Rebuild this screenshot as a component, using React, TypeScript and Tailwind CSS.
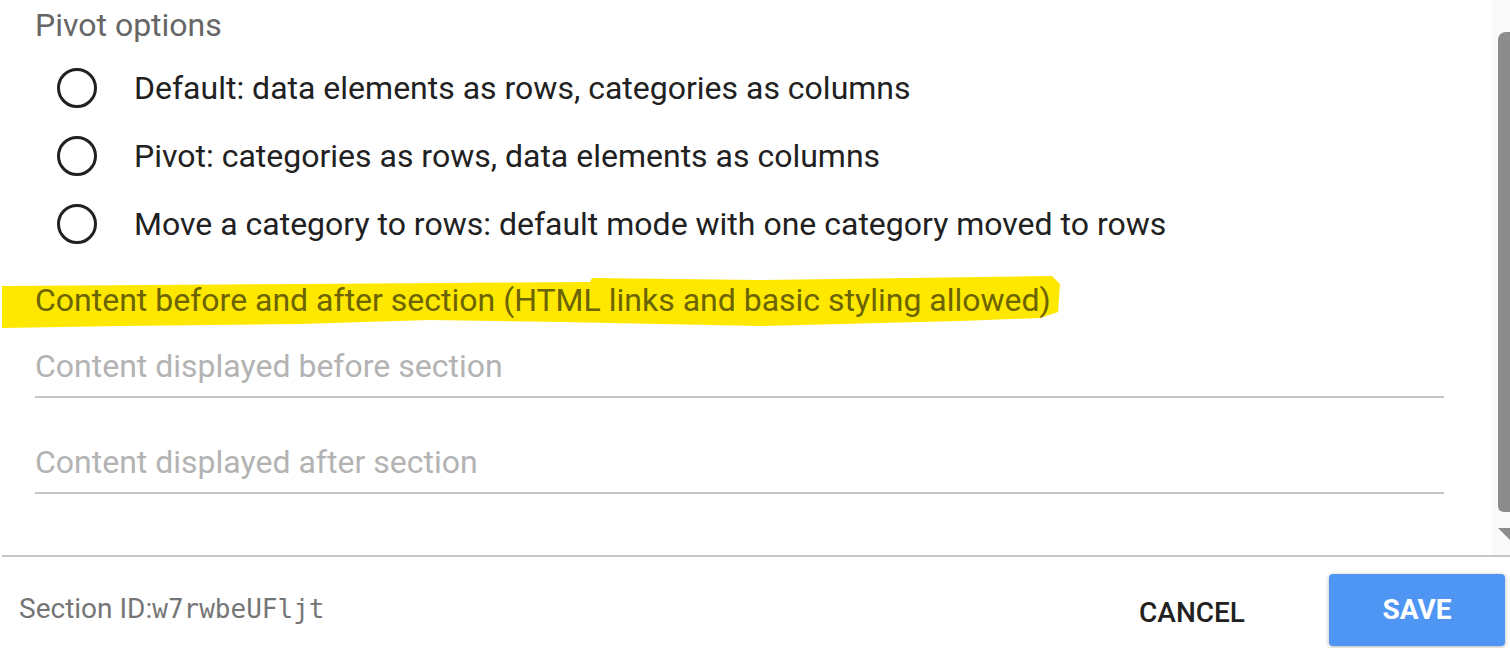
const options = [
  'Default: data elements as rows, categories as columns',
  'Pivot: categories as rows, data elements as columns',
  'Move a category to rows: default mode with one category moved to rows',
]

const App = () => {
  return (
    <div className="w-[1510px] h-[648px] bg-white flex flex-col overflow-hidden font-['Roboto',sans-serif]">
      {/* scrollable dialog body */}
      <div className="flex h-[555px]">
        <div className="relative flex-1 pl-[35px] pr-[48px]">
          {/* marker highlight drawn over the label */}
          <svg className="absolute left-0 top-[274px] w-[1062px] h-[58px]" viewBox="0 0 1062 58">
            <path
              d="M2 12 L300 10 L590 8 L592 4 L760 6 L1052 2 L1060 10 L1058 38 L1040 44 L960 47 L760 52 L560 48 L430 46 L300 50 L120 52 L2 54 Z"
              fill="#ffe800"
            />
          </svg>

          <div className="h-[50px] flex items-center text-[32px] text-[#666666]">Pivot options</div>

          <div className="flex flex-col mt-[4px]">
            {options.map((o) => (
              <div key={o} className="h-[68px] flex items-center gap-[38px] pl-[22px]">
                <span className="w-[40px] h-[40px] rounded-full border-[3px] border-[#212121] shrink-0" />
                <span className="text-[32px] text-[#212121] -ml-[1px]">{o}</span>
              </div>
            ))}
          </div>

          <div className="relative h-[50px] mt-[17px] flex items-center text-[32px] text-[#6b6400]">
            Content before and after section (HTML links and basic styling allowed)
          </div>

          <div className="flex flex-col mt-[11px] gap-[34px]">
            <div className="h-[62px] flex items-center border-b-2 border-[#c4c4c4] text-[32px] text-[#b3b3b3]">
              Content displayed before section
            </div>
            <div className="h-[62px] flex items-center border-b-2 border-[#c4c4c4] text-[32px] text-[#b3b3b3]">
              Content displayed after section
            </div>
          </div>
        </div>

        {/* scrollbar */}
        <div className="w-[18px] bg-[#fafafa] flex flex-col items-end">
          <div className="mt-[32px] w-[12px] h-[480px] bg-[#8c8c8c] rounded-tl-[8px] rounded-bl-[6px]" />
          <svg className="mt-[16px]" width="12" height="12" viewBox="0 0 12 12">
            <path d="M0 0 L12 0 L12 12 Z" fill="#8c8c8c" />
          </svg>
        </div>
      </div>

      <div className="h-[2px] ml-[2px] bg-[#c6c6c6]" />

      {/* footer */}
      <div className="flex-1 flex items-center pl-[19px] pr-[5px]">
        <div className="text-[28px] text-[#757575] mt-[12px]">
          Section ID:<span className="font-['DejaVu_Sans_Mono',monospace] text-[26px]">w7rwbeUFljt</span>
        </div>
        <div className="ml-auto flex items-center gap-[66px]">
          <button className="text-[28px] font-medium text-[#212121] mt-[20px] px-[18px]">CANCEL</button>
          <button className="w-[176px] h-[72px] mt-[14px] rounded-[4px] bg-[#4f96f4] text-white text-[28px] font-bold shadow-[0_1px_4px_rgba(0,0,0,0.3)]">
            SAVE
          </button>
        </div>
      </div>
    </div>
  )
}

export default App
